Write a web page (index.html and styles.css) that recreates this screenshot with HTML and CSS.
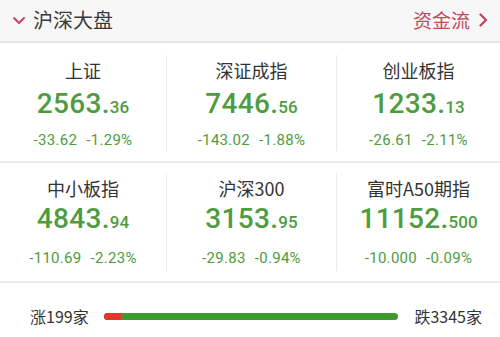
FILE: index.html
```html
<!DOCTYPE html>
<html>
<head>
<meta charset="utf-8">
<link rel="stylesheet" href="styles.css">
</head>
<body>
<div class="page">
  <div class="header">
    <div class="header-left">
      <svg class="chev-down" width="14" height="9" viewBox="0 0 14 9"><path d="M2 2 L7 7 L12 2" fill="none" stroke="#c6475a" stroke-width="2" stroke-linecap="round" stroke-linejoin="round"/></svg>
      <span class="title">沪深大盘</span>
    </div>
    <div class="header-right">
      <span class="flow">资金流</span>
      <svg class="chev-right" width="10" height="16" viewBox="0 0 10 16"><path d="M2.5 2.5 L8 8 L2.5 13.5" fill="none" stroke="#c6475a" stroke-width="2.4" stroke-linecap="round" stroke-linejoin="round"/></svg>
    </div>
  </div>

  <div class="row">
    <div class="cell">
      <div class="name">上证</div>
      <div class="price"><span class="int">2563.</span><span class="dec">36</span></div>
      <div class="chg"><span>-33.62</span><span>-1.29%</span></div>
    </div>
    <div class="cell divided">
      <div class="name">深证成指</div>
      <div class="price"><span class="int">7446.</span><span class="dec">56</span></div>
      <div class="chg"><span>-143.02</span><span>-1.88%</span></div>
    </div>
    <div class="cell divided">
      <div class="name">创业板指</div>
      <div class="price"><span class="int">1233.</span><span class="dec">13</span></div>
      <div class="chg"><span>-26.61</span><span>-2.11%</span></div>
    </div>
  </div>

  <div class="row second">
    <div class="cell">
      <div class="name">中小板指</div>
      <div class="price"><span class="int">4843.</span><span class="dec">94</span></div>
      <div class="chg"><span>-110.69</span><span>-2.23%</span></div>
    </div>
    <div class="cell divided">
      <div class="name">沪深300</div>
      <div class="price"><span class="int">3153.</span><span class="dec">95</span></div>
      <div class="chg"><span>-29.83</span><span>-0.94%</span></div>
    </div>
    <div class="cell divided">
      <div class="name">富时A50期指</div>
      <div class="price"><span class="int">11152.</span><span class="dec">500</span></div>
      <div class="chg"><span>-10.000</span><span>-0.09%</span></div>
    </div>
  </div>

  <div class="footer">
    <span class="count">涨199家</span>
    <div class="bar"><div class="bar-up" style="width:6%"></div></div>
    <span class="count">跌3345家</span>
  </div>
</div>
</body>
</html>
```

FILE: styles.css
```css
* { box-sizing: border-box; }
html, body { margin: 0; padding: 0; background: #fff; }
body {
  font-family: Roboto, "Noto Sans CJK SC", sans-serif;
  width: 500px;
  height: 337px;
  overflow: hidden;
}
.page { width: 500px; }

.header {
  height: 43px;
  background: #f7f7f7;
  border-bottom: 2px solid #e6e6e6;
  display: flex;
  align-items: center;
  justify-content: space-between;
  padding: 0 12px 2px 12px;
}
.header-left { display: flex; align-items: center; gap: 7px; }
.chev-down { margin-top: 2px; }
.title {
  font-family: "Noto Sans CJK SC", sans-serif;
  font-size: 20px;
  color: #3a3a3a;
}
.header-right { display: flex; align-items: center; gap: 8px; }
.flow {
  font-family: "Noto Sans CJK SC", sans-serif;
  font-size: 19px;
  color: #c6475a;
}

.row {
  display: grid;
  grid-template-columns: 166px 170px 164px;
  height: 120px;
  border-bottom: 2px solid #ececec;
}
.cell {
  display: flex;
  flex-direction: column;
  align-items: center;
  margin: 12px 0 10px;
}
.divided { border-left: 1px solid #ececec; }

.name {
  font-family: "Noto Sans CJK SC", sans-serif;
  font-size: 18px;
  color: #333;
  line-height: 30px;
}
.price {
  color: #4e9c3f;
  font-weight: 500;
  line-height: 36px;
  margin-top: 1px;
}
.price .int { font-size: 28px; letter-spacing: 0.3px; }
.price .dec { font-size: 17px; }
.chg {
  display: flex;
  gap: 9px;
  color: #4e9c3f;
  font-size: 15px;
  line-height: 20px;
  margin-top: 4px;
  letter-spacing: 0.3px;
}
.second .cell { margin-top: 10px; }
.second .price { margin-top: -2px; }
.second .chg { margin-top: 7px; }

.footer {
  display: flex;
  align-items: center;
  height: 52px;
  padding: 14px 18px 0 30px;
}
.count {
  font-family: "Noto Sans CJK SC", sans-serif;
  font-size: 16px;
  color: #333;
}
.bar {
  flex: 1;
  height: 7px;
  border-radius: 4px;
  background: #3e9a2f;
  margin: 0 16px 0 15px;
  overflow: hidden;
}
.bar-up { height: 100%; background: #e5352b; }
```
